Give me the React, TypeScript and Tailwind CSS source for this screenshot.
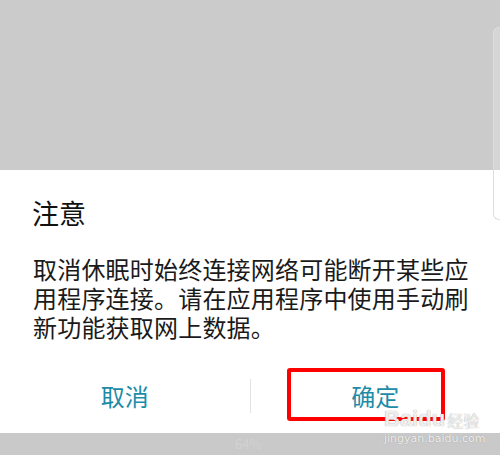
export default function App() {
  const cjk = { fontFamily: '"Noto Sans CJK SC", "Noto Sans", sans-serif' };

  return (
    <div className="relative flex h-[455px] w-[500px] flex-col overflow-hidden bg-white" style={cjk}>
      {/* dimmed screen behind the dialog */}
      <div className="h-[170px] shrink-0 bg-[#cbcbcb]" />

      {/* dialog */}
      <div className="flex flex-1 flex-col bg-white">
        <div className="pl-[32px] pt-[27px] text-[27px] leading-[32px] text-[#111]">注意</div>
        <div className="mt-[25px] pl-[33px] text-[24px] leading-[29px] tracking-[0.2px] text-[#1a1a1a]">
          取消休眠时始终连接网络可能断开某些应
          <br />
          用程序连接。请在应用程序中使用手动刷
          <br />
          新功能获取网上数据。
        </div>
        <div className="mt-[38px] flex items-center">
          <div className="flex-1 text-center text-[24px] leading-[34px] text-[#1e8ca8]">取消</div>
          <div className="h-[34px] w-px bg-[#e2e2e2]" />
          <div className="flex-1 text-center text-[24px] leading-[34px] text-[#1e8ca8]">确定</div>
        </div>
      </div>

      {/* status bar strip */}
      <div className="flex h-[22px] shrink-0 items-center bg-[#c9c9c9] pl-[235px] text-[13px] text-[#d2d2d2]">
        64%
      </div>

      {/* side panel edge */}
      <div className="absolute right-0 top-[27px] h-[193px] w-[7px] rounded-l-md border border-r-0 border-[#dedede] bg-white/20" />

      {/* red highlight box */}
      <div className="absolute left-[287px] top-[368px] h-[53px] w-[158px] rounded-[3px] border-[4px] border-[#ff0000]" />

      {/* watermark */}
      <div className="absolute left-[384px] top-[408px] flex flex-col items-start leading-none text-white/85 [text-shadow:0_0_1px_#8a8a8a]">
        <span className="flex items-end">
          <span className="text-[22px] font-bold" style={{ fontFamily: '"Liberation Sans", sans-serif' }}>
            Baidu
          </span>
          <span className="mb-[2px] ml-[2px] text-[16px]" style={cjk}>
            经验
          </span>
        </span>
        <span className="mt-[3px] text-[11px]" style={{ fontFamily: '"DejaVu Sans", sans-serif' }}>
          jingyan.baidu.com
        </span>
      </div>
    </div>
  );
}
